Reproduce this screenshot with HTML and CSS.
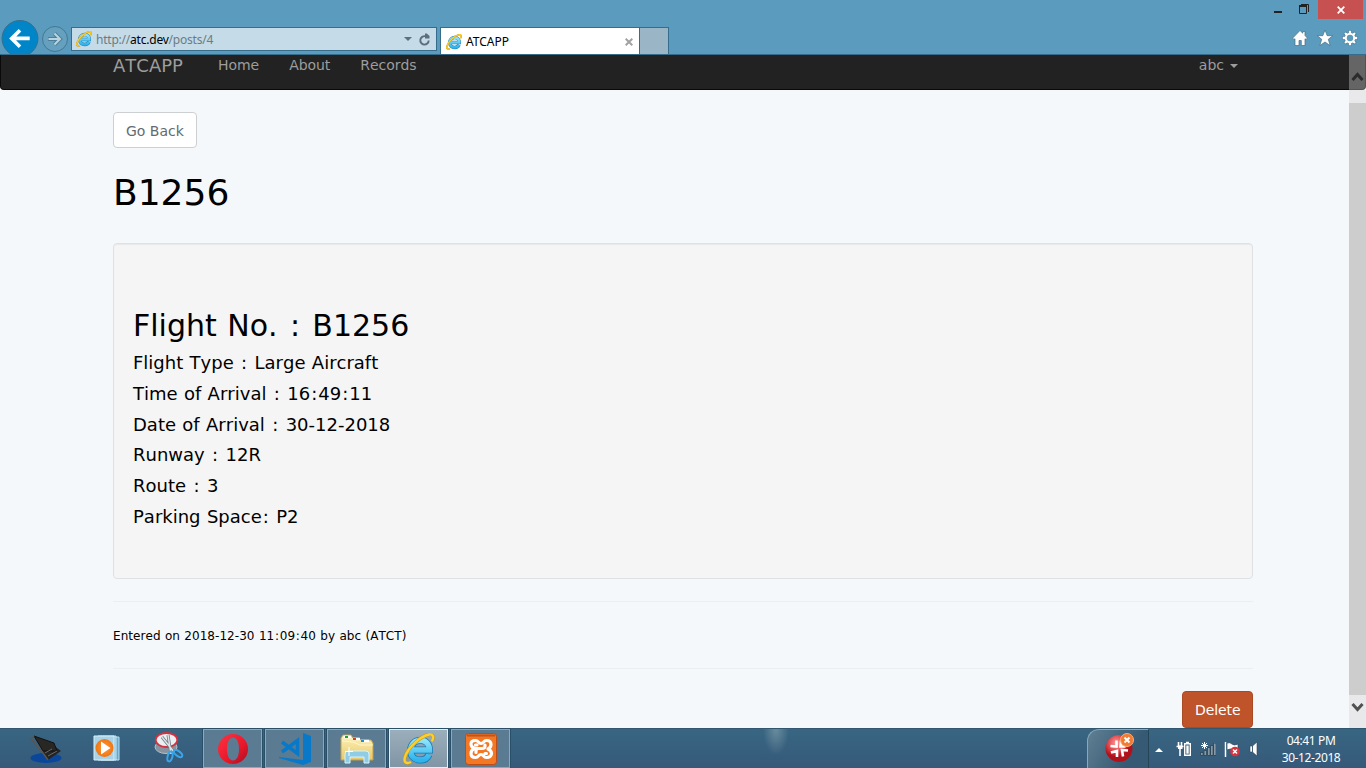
FILE: index.html
```html
<!DOCTYPE html>
<html lang="en">
<head>
<meta charset="utf-8">
<title>ATCAPP</title>
<link rel="stylesheet" href="styles.css">
</head>
<body>
<svg class="defs" aria-hidden="true">
  <defs>
    <linearGradient id="blue" x1="0" y1="0" x2="0" y2="1"><stop offset="0" stop-color="#8fe4fb"/><stop offset="1" stop-color="#2fb4ec"/></linearGradient>
    <linearGradient id="opera" x1="0" y1="0" x2="1" y2="1"><stop offset="0" stop-color="#ff3341"/><stop offset=".6" stop-color="#e8172b"/><stop offset="1" stop-color="#a50e20"/></linearGradient>
    <linearGradient id="folder" x1="0" y1="0" x2="0" y2="1"><stop offset="0" stop-color="#fdf3bd"/><stop offset="1" stop-color="#e8c869"/></linearGradient>
    <radialGradient id="orange"><stop offset="0" stop-color="#ff9a3c"/><stop offset="1" stop-color="#f07512"/></radialGradient>
    <radialGradient id="red" cx=".4" cy=".3"><stop offset="0" stop-color="#ff9c9c"/><stop offset=".6" stop-color="#dd474c"/><stop offset="1" stop-color="#b0121c"/></radialGradient>
    <symbol id="ie" viewBox="0 0 32 32">
      <path d="M9 17H26.500C26.500 11 22.500 7.200 17.500 7.200C12 7.200 7.500 11.500 7.500 17.500C7.500 23.500 12 27 17.500 27C21.500 27 24.500 25 26 21.500" fill="none" stroke="#1b78b4" stroke-width="7"/>
      <path d="M9 17H26.500C26.500 11 22.500 7.200 17.500 7.200C12 7.200 7.500 11.500 7.500 17.500C7.500 23.500 12 27 17.500 27C21.500 27 24.500 25 26 21.500" fill="none" stroke="url(#blue)" stroke-width="5.400"/>
      <path d="M8 29C3 31.500 .5 29 2 24C5 14 18 3 26 1.500C30.500.800 31 4 29 8.500" fill="none" stroke="#c9951a" stroke-width="3.400"/>
      <path d="M8 29C3 31.500 .5 29 2 24C5 14 18 3 26 1.500C30.500.800 31 4 29 8.500" fill="none" stroke="#fbd02c" stroke-width="2.400"/>
    </symbol>
  </defs>
</svg>

<header class="chrome">
  <div class="window-buttons">
    <svg class="win-min" width="8" height="20"><path d="M0 12h8" stroke="#222" stroke-width="2"/></svg>
    <svg class="win-max" width="10" height="20" fill="none" stroke="#222"><path d="M.500 5.500h7v8h-7zM2 4.500h7.500v7.500"/><path d="M0 6h8" stroke-width="2"/></svg>
    <div class="win-close"><svg width="8" height="8"><path d="M.7.700l6.600 6.600M7.300.700L.7 7.300" stroke="#fff" stroke-width="1.800"/></svg></div>
  </div>
  <div class="bar">
    <svg class="back" width="40" height="35" viewBox="0 0 40 35"><circle cx="20" cy="19" r="18.500" fill="#0086c8" stroke="#376d8b"/><path d="M30 19H13M20 10.500L11.500 19L20 27.500" fill="none" stroke="#fff" stroke-width="3.800"/></svg>
    <svg class="forward" width="26" height="26" viewBox="0 0 26 26"><circle cx="13" cy="13" r="12.500" fill="#65a0bf" stroke="#427894"/><path d="M6 13h11M12.500 7.500L18 13l-5.500 5.500" fill="none" stroke="#4d7f99" stroke-width="4"/><path d="M6.500 13h11M12.500 7.500L18 13l-5.500 5.500" fill="none" stroke="#b9d4e1" stroke-width="2"/></svg>
    <div class="address">
      <svg width="16" height="16"><use href="#ie"/></svg>
      <span class="url">http://<b>atc.dev</b>/posts/4</span>
      <svg class="drop" width="8" height="4"><path d="M0 0h8L4 4z" fill="#5d717d"/></svg>
      <svg class="reload" width="12" height="13" viewBox="0 0 12 13"><path d="M9.700 7.500A4.200 4.200 0 1 1 6.500 3.300" fill="none" stroke="#5b6e79" stroke-width="1.900"/><path d="M6 0.500h1.800L10.500 3V5.500H6z" fill="#5b6e79"/></svg>
    </div>
    <div class="tab">
      <svg width="16" height="16"><use href="#ie"/></svg>
      <span>ATCAPP</span>
      <svg class="tab-close" width="8" height="8"><path d="M.7.700l6.600 6.600M7.300.700L.7 7.300" stroke="#a2a2a2" stroke-width="2"/></svg>
    </div>
    <div class="new-tab"></div>
    <div class="tools">
      <svg width="16" height="16" viewBox="0 0 16 16"><path d="M8 .5L.7 8l1.100 1.600L3 8.800V15.500h4v-5h2.300v5H13V8.800l1.200 .8L15.300 8L13 5.500V1.500h-2.200v1.700z" fill="#fff" stroke="#426f88" stroke-width=".7"/></svg>
      <svg width="16" height="16" viewBox="0 0 16 16"><path d="M8 0L10.200 5.700h5.600L11.300 9.300L13.200 15.600L8 12L2.800 15.600L4.700 9.300L.2 5.700H5.800z" fill="#fff" stroke="#426f88" stroke-width=".7"/></svg>
      <svg width="16" height="16" viewBox="0 0 16 16"><g stroke="#426f88" stroke-width="3.600"><path d="M8 .5v15M.5 8h15M2.700 2.700l10.600 10.600M13.300 2.700L2.700 13.300"/></g><g stroke="#fff" stroke-width="2.400"><path d="M8 .8v14.400M.8 8h14.400M3 3l10 10M13 3L3 13"/></g><circle cx="8" cy="8" r="4.200" fill="#5b9bbe" stroke="#fff" stroke-width="2"/></svg>
    </div>
  </div>
</header>

<main class="viewport">
  <nav class="navbar">
    <span class="brand">ATCAPP</span><a>Home</a><a>About</a><a>Records</a>
    <span class="user">abc <i class="caret"></i></span>
  </nav>
  <div class="container">
    <a class="btn btn-default">Go Back</a>
    <h1>B1256</h1>
    <section class="well">
      <h2>Flight No. <i>:</i> B1256</h2>
      <h4>Flight Type <i>:</i> Large Aircraft</h4>
      <h4>Time of Arrival <i>:</i> 16<i>:</i>49<i>:</i>11</h4>
      <h4>Date of Arrival <i>:</i> 30-12-2018</h4>
      <h4>Runway <i>:</i> 12R</h4>
      <h4>Route <i>:</i> 3</h4>
      <h4>Parking Space<i>:</i> P2</h4>
    </section>
    <hr>
    <small>Entered on 2018-12-30 11<i>:</i>09<i>:</i>40 by abc (ATCT)</small>
    <hr>
    <a class="btn btn-danger">Delete</a>
  </div>
  <div class="scrollbar">
    <svg width="17" height="35"><path d="M3.500 25l5-5.500l5 5.500" fill="none" stroke="#2b2b2b" stroke-width="3"/></svg>
    <div class="thumb"></div>
    <svg width="17" height="33"><path d="M3.500 9l5 5.500l5-5.500" fill="none" stroke="#505050" stroke-width="3"/></svg>
  </div>
</main>

<footer class="taskbar">
  <div class="launchers">
    <svg width="32" height="32" viewBox="0 0 32 32"><ellipse cx="16" cy="26" rx="15.500" ry="5" fill="#0a479b"/><path d="M12 20L23 13L31 19L18 28z" fill="#242424"/><path d="M4 4L24 11L27 19L13 19z" fill="#292724" stroke="#111"/><path d="M4 4L1 7L13 21L18 28" fill="none" stroke="#5c5650" stroke-width="1.500"/><path d="M18 24l9-5M15 21l7-4" stroke="#6c6964"/></svg>
    <svg width="32" height="32" viewBox="0 0 32 32"><path d="M9 5h18v23H9z" fill="#68a7cc" stroke="#b9e1f3"/><path d="M6 4h18v24H6z" fill="#85bfdc" stroke="#c9e9f6"/><path d="M2 4h20v24H2z" fill="#a7d2e7" stroke="#d9f0f9"/><circle cx="12.500" cy="16" r="9" fill="url(#orange)"/><path d="M9 9.500v13L18.500 16z" fill="#fff"/></svg>
    <svg width="32" height="32" viewBox="0 0 32 32"><ellipse cx="12" cy="15" rx="11" ry="6.500" fill="#87949f" stroke="#b4c0c9"/><ellipse cx="12.500" cy="8" rx="10.800" ry="7" fill="#edf0f2" stroke="#d43141" stroke-width="1.800"/><path d="M8 5l12 15M14 3l3 19" stroke="#727b82" stroke-width="3"/><path d="M8 5l12 15M14 3l3 19" stroke="#dde3e7" stroke-width="1.500"/><ellipse cx="16" cy="24.500" rx="2.400" ry="5" transform="rotate(14 16 24.500)" fill="none" stroke="#39a5e8" stroke-width="2"/><ellipse cx="24" cy="21.500" rx="2.400" ry="5" transform="rotate(-52 24 21.500)" fill="none" stroke="#39a5e8" stroke-width="2"/></svg>
  </div>
  <div class="apps">
    <div class="app"><svg width="32" height="32" viewBox="0 0 32 32"><path fill-rule="evenodd" fill="url(#opera)" d="M16 1a15 15 0 1 0 0 30a15 15 0 1 0 0-30zM16 4.500c4 0 6 5 6 11.500s-2 11.500-6 11.500s-6-5-6-11.500s2-11.500 6-11.500z"/></svg></div>
    <div class="app"><svg width="34" height="34" viewBox="0 0 34 34"><path d="M25 1l8 3v26l-8 3L1 26v-1l24 3z" fill="#0879c9"/><path d="M4 10L19.500 21.500V8.500L4 20" fill="none" stroke="#0879c9" stroke-width="3.500"/></svg></div>
    <div class="app"><svg width="34" height="32" viewBox="0 0 34 32"><path d="M1 5l2-3h8l2 3h6l2 2h10l2 3v17H1z" fill="url(#folder)" stroke="#bd9f4e"/><path d="M4 4h7M13 6h7M21 8h8" stroke="#fff" stroke-width="2.500"/><path d="M5 4h3" stroke="#13a635" stroke-width="2"/><path d="M13 6h3" stroke="#d53e24" stroke-width="2"/><path d="M21 8h3" stroke="#1690db" stroke-width="2"/><path d="M2 8l11 1l7 3h13" fill="none" stroke="#fff6ca"/><path d="M5 30V21q0-3 3-3h18q3 0 3 3v9h-5v-6H10v6z" fill="#91cce5" stroke="#d5f4fd"/><path d="M9 14v9M5 18.500h8" stroke="#fff"/></svg></div>
    <div class="app active"><svg width="32" height="32"><use href="#ie"/></svg></div>
    <div class="app"><svg width="32" height="32" viewBox="0 0 32 32"><rect x=".5" y=".5" width="31" height="31" rx="3" fill="#f47723" stroke="#b94c18"/><path d="M2 2.500h28" stroke="#bf5522" stroke-width="2"/><path d="M12 12H10.500M20 12V13Q20 15.500 17 15.500H13.500Q11 15.500 11 18V19.500M20 20.500H21.500M13.500 15.500H10.500Q6 14.500 6 11Q6 7.500 10.500 7.500C14 7.500 13 10.500 16 10.500S18 7.500 21.500 7.500Q26 7.500 26 11.500Q26 14.500 23 16Q26.500 17.500 26.500 20.500Q26 24.500 21.500 24.500C18 24.500 19 21.500 16 21.500S14 24.500 10.500 24.500Q6 24.500 6 20.500Q6 17 9 15.700" fill="none" stroke="#fff" stroke-width="3.200" stroke-linejoin="round" stroke-linecap="round"/></svg></div>
  </div>
  <div class="gadget"><svg width="32" height="30" viewBox="0 0 32 30"><circle cx="15" cy="15.500" r="13.500" fill="url(#red)"/><g fill="none" stroke="#fff" stroke-width="2.600"><path d="M6.500 13l6 .5l0-6M17 7.500l-.5 6h5M24 17.500l-6-.5l1 6.500M13 24v-6l-6 1.500"/></g><circle cx="23" cy="7" r="6.500" fill="#f27a32" stroke="#ffae76"/><path d="M20.500 4.500l5 5M25.500 4.500l-5 5" stroke="#fff" stroke-width="2"/></svg></div>
  <div class="tray">
    <svg width="8" height="16"><path d="M0 11l4-4l4 4z" fill="#fff"/></svg>
    <svg width="16" height="16" viewBox="0 0 16 16"><path d="M2.500 1v4M5.500 1v4M.5 5.500h7M4 5v4M4 8v7" fill="none" stroke="#fff" stroke-width="1.600"/><path d="M2 4.500h4.500v3.500H2z" fill="#fff"/><path d="M8.700 2.700h5.600v11.600H8.700z" fill="#36596f" stroke="#fff" stroke-width="1.400"/><path d="M10 1.500h3" stroke="#fff" stroke-width="1.500"/><path d="M10.300 4.500h2.400v8.200h-2.400z" fill="#fff"/></svg>
    <svg width="16" height="16" viewBox="0 0 16 16"><path d="M1.800 14.500v-3M5.300 14.500v-5M8.800 14.500V6.500M11.800 14.500V4.500M14.800 14.500V2" stroke="#253f50" stroke-width="3"/><path d="M1.800 14v-2M5.300 14v-4M8.800 14V7M11.800 14V5M14.800 14V2.500" stroke="#8699a4" stroke-width="1.800"/><path d="M4.500 1v7M1 4.500h7M2 2l5 5M7 2L2 7" stroke="#fff"/></svg>
    <svg width="16" height="16" viewBox="0 0 16 16"><path d="M1.500 1v15" stroke="#fff" stroke-width="1.500"/><path d="M3 2q3-1 5 1t6 0v7q-3 1-5-1t-6 0z" fill="#fff" stroke="#2c4658" stroke-width=".7"/><circle cx="11" cy="10.500" r="4.800" fill="#d9333d"/><path d="M9 8.500l4 4M13 8.500l-4 4" stroke="#fff" stroke-width="1.500"/></svg>
    <svg width="16" height="16" viewBox="0 0 16 16"><path d="M2 5h2.500L9 1v14l-4.500-4H2z" fill="#fff" stroke="#2c4658" stroke-width=".6"/><path d="M4.500 5v6" stroke="#416278"/></svg>
  </div>
  <div class="clock"><span>04:41 PM</span><span>30-12-2018</span></div>
</footer>
</body>
</html>
```
FILE: styles.css
```css
* { box-sizing: border-box; }
body { margin: 0; width: 1366px; height: 768px; overflow: hidden; display: flex; flex-direction: column; font: 14px/23px "DejaVu Sans", sans-serif; font-kerning: none; color: #000; background: #f5f8fa; }
svg { display: block; flex: none; }
.defs { position: absolute; width: 0; height: 0; }

.chrome { height: 55px; flex: none; background: #5b9bbe; border-bottom: 1px solid #376d8b; font: 12px/16px "Noto Sans", sans-serif; }
.window-buttons { height: 20px; display: flex; justify-content: flex-end; padding-right: 3px; }
.win-min { margin-right: 17px; }
.win-max { margin-right: 9px; }
.win-close { width: 45px; height: 19px; background: #c75050; display: flex; align-items: center; justify-content: center; }
.bar { height: 34px; display: flex; align-items: flex-start; }
.back { height: 34px; }
.forward { margin: 6px 0 0 2px; }
.address { width: 366px; height: 24px; margin: 7px 0 0 3px; padding: 0 5px 0 4px; border: 1px solid #376d8b; background: #c5dbe8; display: flex; align-items: center; }
.url { flex: 1; margin: 2px 0 0 4px; color: #6c7b84; letter-spacing: -.22px; }
.url b { color: #000; font-weight: 400; }
.reload { margin-left: 7px; }
.tab { width: 200px; height: 27px; margin: 7px 0 0 3px; padding: 1px 6px 0 5px; background: #fff; border: 1px solid #376d8b; border-bottom: 0; display: flex; align-items: center; gap: 4px; }
.tab span { padding-top: 1px; }
.tab-close { margin-left: auto; }
.new-tab { width: 29px; height: 27px; margin-top: 7px; background: #9ab5c5; border: 1px solid #376d8b; border-width: 1px 1px 0 0; }
.tools { margin: 10px 8px 0 auto; display: flex; gap: 9px; }

.viewport { height: 673px; flex: none; position: relative; overflow: hidden; background: #f5f8fa; }
.navbar { height: 35px; padding: 0 127px 13px 112px; display: flex; align-items: center; background: #222; border: 1px solid #090909; border-top: 0; border-radius: 0 0 4px 4px; color: #9d9d9d; }
.navbar a { margin-right: 30px; letter-spacing: -.05px; }
.brand { width: 105px; font-size: 18px; padding-bottom: 1px; }
.user { margin-left: auto; display: flex; align-items: center; gap: 6px; }
.caret { border: 4px solid transparent; border-top-color: #9d9d9d; border-bottom: 0; }
.container { width: 1140px; margin: 22px auto 0; display: flex; flex-direction: column; align-items: flex-start; }
.btn { height: 36px; padding: 7px 12px 5px; border: 1px solid #ccd0d2; border-radius: 4px; line-height: 23px; white-space: nowrap; }
.btn-default { width: 84px; background: #fff; color: #636b6f; }
.btn-danger { width: 71px; height: 37px; align-self: flex-end; background: #bf5329; border-color: #aa4a24; color: #fff; letter-spacing: -.1px; }
h1, h2, h4 { margin: 0; font-weight: 400; line-height: 1.1; white-space: nowrap; word-spacing: .034em; }
h1 { font-size: 36px; margin: 25px 0 30px; height: 40px; }
h2 i, h4 i, small i { font-style: normal; padding: 0 .058em; }
.well { width: 100%; height: 336px; padding: 65px 19px 0; background: #f5f5f5; border: 1px solid #dfe2e4; border-radius: 4px; box-shadow: inset 0 1px 1px rgba(0,0,0,.05); display: flex; flex-direction: column; gap: 11px; }
h2 { font-size: 30px; }
h4 { font-size: 18px; }
hr { width: 100%; height: 1px; margin: 22px 0; border: 0; background: #eceeef; }
small { font-size: 12px; line-height: 20px; padding-top: 2px; word-spacing: .04em; letter-spacing: .05px; }
.scrollbar { position: absolute; top: 0; right: 0; width: 17px; height: 673px; background: linear-gradient(rgba(255,255,255,.3) 35px, #e9e9eb 35px); display: flex; flex-direction: column; }
.thumb { margin-top: 13px; height: 592px; background: #cdcdcd; }

.taskbar { height: 40px; flex: none; display: flex; background: radial-gradient(ellipse 13px 26px at 776px 0, rgba(120,150,165,.7) 10%, transparent), linear-gradient(#386682, #36597a); border-top: 1px solid #31566f; color: #fff; }
.launchers { width: 203px; padding: 3px 0 0 30px; display: flex; gap: 30px; }
.apps { display: flex; gap: 3px; }
.app { width: 59px; height: 39px; border: 1px solid #91a6b6; background: #5a7b92; outline: 1px solid #2a5069; display: flex; align-items: center; justify-content: center; }
.app.active { border-color: #e6edf2; background: linear-gradient(#9baebb, #8095a5); }
.gadget { margin-left: auto; width: 62px; border: 1px solid #8ba7b8; border-width: 1px 1px 0; border-right-color: #264458; border-radius: 12px 0 0 0; background: linear-gradient(120deg, #607f93, #365a73 70%); padding: 3px 0 0 16px; }
.tray { width: 117px; display: flex; align-items: center; gap: 8px; padding-left: 6px; }
.tray svg:first-child { margin-right: 5px; }
.clock { width: 100px; padding: 3px 10px 0 0; display: flex; flex-direction: column; align-items: center; font: 12px/17px "Noto Sans", sans-serif; white-space: nowrap; letter-spacing: -.4px; }
```
